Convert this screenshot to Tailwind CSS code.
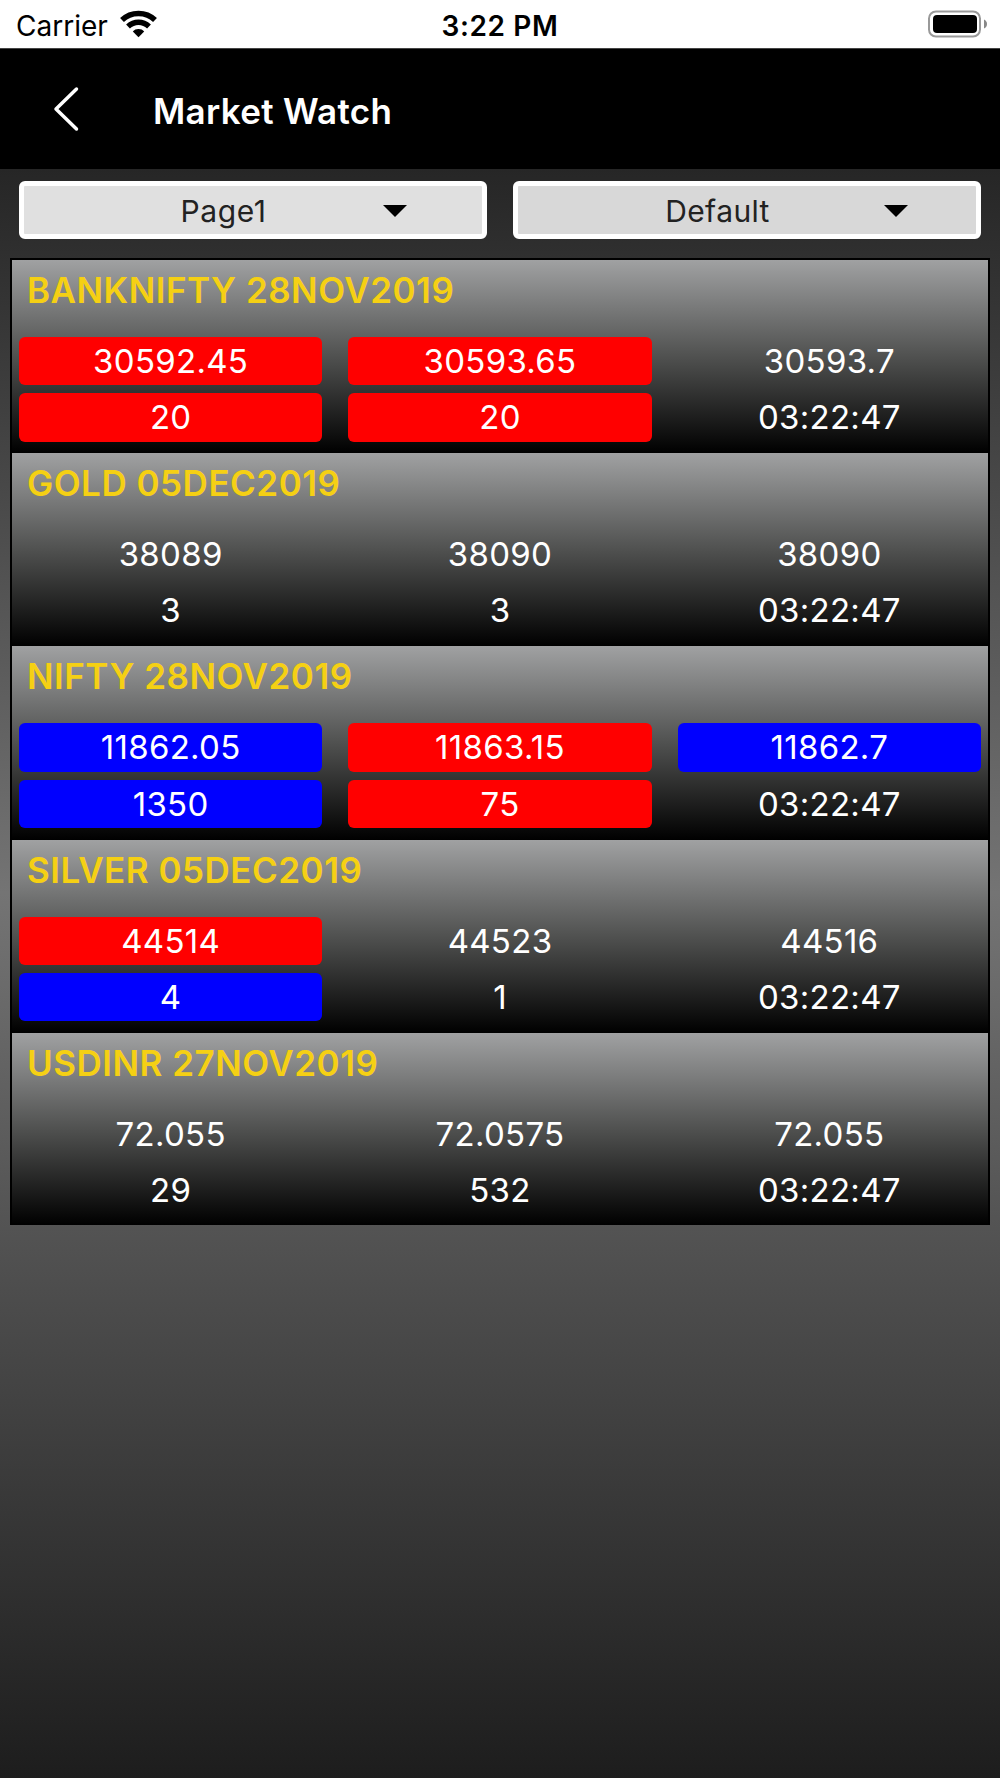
<!DOCTYPE html>
<html lang="en">
<head>
    <meta charset="UTF-8">
    <meta name="viewport" content="width=device-width, initial-scale=1.0">
    <title>Market Watch</title>
    <script src="https://cdn.jsdelivr.net/npm/@tailwindcss/browser@4"></script>
    <style>
        body {
            font-family: Inter, sans-serif;
        }
    </style>
</head>
<body class="w-[1000px] h-[1778px] overflow-hidden flex flex-col bg-black">
    <!-- Status bar -->
    <div class="h-12 shrink-0 bg-white text-black grid grid-cols-3 items-center">
        <div class="flex items-center pl-4 gap-3">
            <span class="text-[28px] leading-8 pt-[3px]">Carrier</span>
            <svg class="w-[37px] h-[28px]" viewBox="0 0 37 28" fill="none" stroke="#000">
                <path d="M2 10C11 1.200 26 1.200 35 10" stroke-width="5.500"/>
                <path d="M8 16.500C14 10.800 23 10.800 29 16.500" stroke-width="5.500"/>
                <path d="M12.800 21.500C15.500 18.200 21.500 18.200 24.200 21.500L18.500 27.200Z" fill="#000" stroke="none"/>
            </svg>
        </div>
        <div class="text-center text-[28px] leading-8 font-semibold tracking-[0.6px] pt-[3px]">3:22 PM</div>
        <div class="flex justify-end items-center pr-[12px]">
            <svg class="w-[60px] h-[28px]" viewBox="0 0 60 28">
                <rect x="1" y="1.500" width="51" height="25" rx="7" fill="none" stroke="#999" stroke-width="2"/>
                <rect x="5" y="5" width="44" height="18" rx="4" fill="#000"/>
                <path d="M56 9.500Q59 11 59 14Q59 17 56 18.500Z" fill="#888"/>
            </svg>
        </div>
    </div>

    <!-- Title bar -->
    <header class="h-[121px] shrink-0 bg-black text-white flex items-center border-t border-[#444]">
        <svg class="w-[26px] h-[46px] ml-[53px]" viewBox="0 0 26 46" fill="none" stroke="#fff" stroke-width="3.500" stroke-linecap="round" stroke-linejoin="round">
            <path d="M23.500 3L3 23L23.500 43"/>
        </svg>
        <h1 class="ml-[74px] pt-[3px] text-[35px] leading-10 font-semibold tracking-[0.3px]">Market Watch</h1>
    </header>

    <main class="flex-1 bg-linear-to-b/srgb from-[#262626] via-[#747474] via-45% to-[#1d1d1d]">
        <div class="grid grid-cols-2 gap-[26px] px-[19px] pt-3">
            <div class="h-[58px] border-5 border-white rounded-md bg-[#e0e0e0] text-[#222] flex items-center">
                <span class="w-[399px] text-center text-[30px] leading-9 tracking-[0.6px] pt-px">Page1</span>
                <svg class="w-6 h-3 -ml-10 mt-0.5" viewBox="0 0 24 12"><path d="M0 0H24L12 12Z"/></svg>
            </div>
            <div class="h-[58px] border-5 border-white rounded-md bg-[#d8d8d8] text-[#222] flex items-center">
                <span class="w-[399px] text-center text-[30px] leading-9 tracking-[0.4px] pt-px">Default</span>
                <svg class="w-6 h-3 -ml-[33px] mt-0.5" viewBox="0 0 24 12"><path d="M0 0H24L12 12Z"/></svg>
            </div>
        </div>
        <div id="quotes" class="mx-[10px] mt-[19px] border-2 border-b-0 border-black"></div>
    </main>

    <script>
        const RED = 'bg-[#ff0000]';
        const BLUE = 'bg-[#0000ff]';

        // cells run bid, ask, last / bid qty, ask qty, time
        const quotes = [
            { name: 'BANKNIFTY 28NOV2019', cells: [['30592.45', RED], ['30593.65', RED], ['30593.7'], ['20', RED], ['20', RED], ['03:22:47']] },
            { name: 'GOLD 05DEC2019', cells: [['38089'], ['38090'], ['38090'], ['3'], ['3'], ['03:22:47']] },
            { name: 'NIFTY 28NOV2019', cells: [['11862.05', BLUE], ['11863.15', RED], ['11862.7', BLUE], ['1350', BLUE], ['75', RED], ['03:22:47']] },
            { name: 'SILVER 05DEC2019', cells: [['44514', RED], ['44523'], ['44516'], ['4', BLUE], ['1'], ['03:22:47']] },
            { name: 'USDINR 27NOV2019', cells: [['72.055'], ['72.0575'], ['72.055'], ['29'], ['532'], ['03:22:47']] }
        ];

        document.getElementById('quotes').innerHTML = quotes.map(quote => `
            <section class="h-[193.2px] last:h-[192px] bg-linear-to-b/srgb from-[#a0a1a2] via-[#505150] to-black">
                <h2 class="pl-[15px] pt-2 h-[77px] text-[35px] leading-[44px] font-semibold tracking-[0.5px] text-[#f5d014]">${quote.name}</h2>
                <div class="grid grid-cols-3 gap-x-[26px] gap-y-2 px-[7px]">
                    ${quote.cells.map(([value, color = '']) => `<div class="h-[48.300px] rounded-md text-center text-white text-[33px] leading-[49px] tracking-[0.3px] ${color}">${value}</div>`).join('')}
                </div>
            </section>`).join('');
    </script>
</body>
</html>
